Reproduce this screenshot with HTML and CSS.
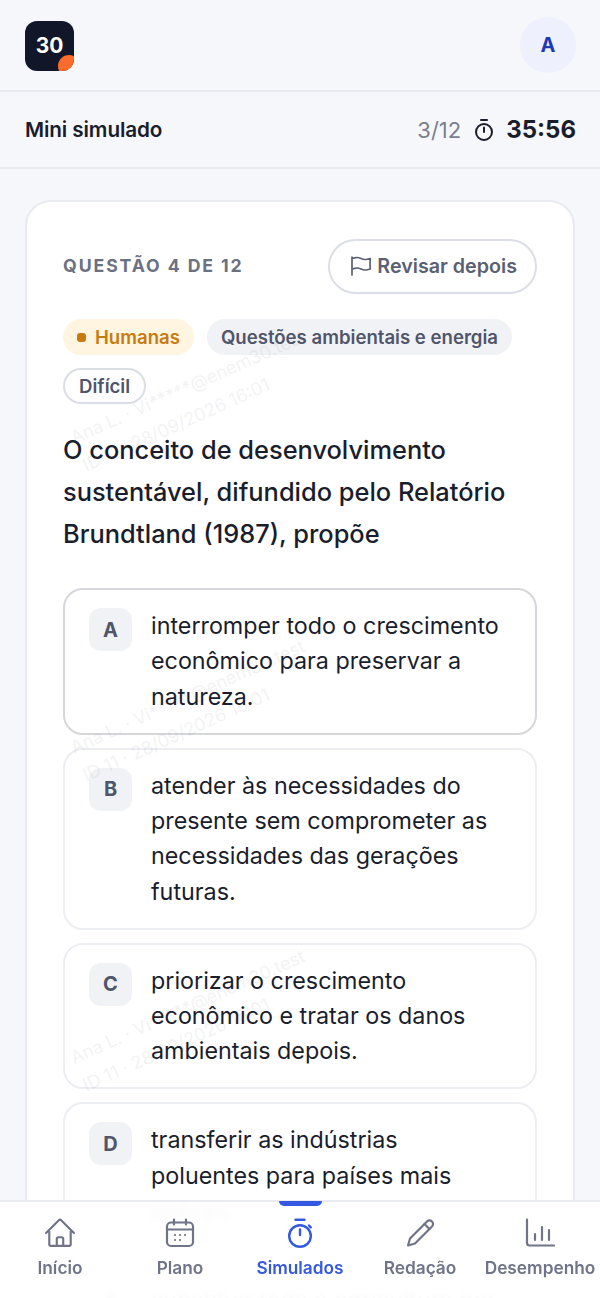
FILE: index.html
```html
<!DOCTYPE html>
<html lang="pt-BR">
<head>
<meta charset="utf-8">
<title>Mini simulado</title>
<link rel="stylesheet" href="styles.css">
</head>
<body>
<div class="page">
  <header class="topbar">
    <div class="logo"><span class="logo-num">30</span><span class="logo-dot"></span></div>
    <div class="avatar">A</div>
  </header>
  <section class="subbar">
    <div class="sub-title">Mini simulado</div>
    <div class="sub-right">
      <span class="progress">3/12</span>
      <svg class="timer-icon" viewBox="0 0 24 24" fill="none" stroke="#1a1d2b" stroke-width="2" stroke-linecap="round"><path d="M9 2h6"/><circle cx="12" cy="14" r="8"/><path d="M12 9.500V14"/></svg>
      <span class="time">35:56</span>
    </div>
  </section>
  <main class="main">
    <article class="card">
      <div class="mark mark-1"><div>Ana L. · Vi*****@enem30.test</div><div>ID 11 · 28/09/2026 16:01</div></div>
      <div class="mark mark-2"><div>Ana L. · Vi*****@enem30.test</div><div>ID 11 · 28/09/2026 16:01</div></div>
      <div class="mark mark-3"><div>Ana L. · Vi*****@enem30.test</div><div>ID 11 · 28/09/2026 16:01</div></div>
      <div class="card-head">
        <div class="q-label">QUESTÃO 4 DE 12</div>
        <button class="review">
          <svg class="flag" viewBox="0 0 24 24" fill="none" stroke="#5b6072" stroke-width="1.7" stroke-linecap="round" stroke-linejoin="round"><path d="M3 3v1.500M3 21v-6m0 0 2.770-.693a9 9 0 0 1 6.208.682l.108.054a9 9 0 0 0 6.086.710l3.114-.732a48.524 48.524 0 0 1-.005-10.499l-3.110.732a9 9 0 0 1-6.085-.711l-.108-.054a9 9 0 0 0-6.208-.682L3 4.500M3 15V4.500"/></svg>
          Revisar depois
        </button>
      </div>
      <div class="tags">
        <span class="tag tag-area"><i class="tag-dot"></i>Humanas</span>
        <span class="tag tag-topic">Questões ambientais e energia</span>
        <span class="tag tag-level">Difícil</span>
      </div>
      <h1 class="question">O conceito de desenvolvimento sustentável, difundido pelo Relatório Brundtland (1987), propõe</h1>
      <div class="options">
        <div class="option option-active"><span class="letter">A</span><span class="opt-text">interromper todo o crescimento econômico para preservar a natureza.</span></div>
        <div class="option"><span class="letter">B</span><span class="opt-text">atender às necessidades do presente sem comprometer as necessidades das gerações futuras.</span></div>
        <div class="option"><span class="letter">C</span><span class="opt-text">priorizar o crescimento econômico e tratar os danos ambientais depois.</span></div>
        <div class="option"><span class="letter">D</span><span class="opt-text">transferir as indústrias poluentes para países mais pobres.</span></div>
        <div class="option"><span class="letter">E</span><span class="opt-text">substituir toda a agricultura por reflorestamento.</span></div>
      </div>
    </article>
  </main>
  <nav class="nav">
    <a class="nav-item">
      <svg class="nav-icon" viewBox="1.5 1.5 21 21" fill="none" stroke="currentColor" stroke-width="1.500" stroke-linecap="round" stroke-linejoin="round"><path d="m2.250 12 8.954-8.955c.44-.439 1.152-.439 1.591 0L21.750 12M4.500 9.750v10.125c0 .621.504 1.125 1.125 1.125H9.750v-4.875c0-.621.504-1.125 1.125-1.125h2.250c.621 0 1.125.504 1.125 1.125V21h4.125c.621 0 1.125-.504 1.125-1.125V9.750M8.250 21h8.250"/></svg>
      <span>Início</span>
    </a>
    <a class="nav-item">
      <svg class="nav-icon" viewBox="0 0 30 30" fill="none" stroke="currentColor" stroke-width="2.200" stroke-linecap="round" stroke-linejoin="round"><rect x="2" y="4.500" width="26" height="23.500" rx="4"/><path d="M2 11.500h26M9 1.500v5M21 1.500v5"/><path d="M10 17h.01M15 17h.01M20 17h.01M10 22h.01M15 22h.01"/></svg>
      <span>Plano</span>
    </a>
    <a class="nav-item nav-active">
      <i class="nav-bar"></i>
      <svg class="nav-icon" viewBox="0 0 30 30" fill="none" stroke="currentColor" stroke-width="2.400" stroke-linecap="round" stroke-linejoin="round"><path d="M10.500 1.800h9"/><circle cx="15" cy="18" r="10.800"/><path d="M15 11.500V17M24 7.500l1.800 1.800"/></svg>
      <span>Simulados</span>
    </a>
    <a class="nav-item">
      <svg class="nav-icon" viewBox="0 0 30 30" fill="none" stroke="currentColor" stroke-width="2.200" stroke-linecap="round" stroke-linejoin="round"><path d="M5 20.500 22 3.500a3.500 3.500 0 0 1 5 5L10 25.500l-7 2z"/><path d="M19.500 6l5 5"/></svg>
      <span>Redação</span>
    </a>
    <a class="nav-item">
      <svg class="nav-icon" viewBox="0 0 30 30" fill="none" stroke="currentColor" stroke-width="2.200" stroke-linecap="round" stroke-linejoin="round"><path d="M2 1.500V25a2.500 2.500 0 0 0 2.500 2.500H29"/><path d="M10 22v-6M17 22V9M24 22V12"/></svg>
      <span>Desempenho</span>
    </a>
  </nav>
</div>
</body>
</html>
```
FILE: styles.css
```css
* { box-sizing: border-box; }
html, body { margin: 0; padding: 0; }
body { font-family: Inter, "Liberation Sans", sans-serif; background: #f6f7fb; color: #1a1d2b; }
.page { position: relative; width: 600px; height: 1298px; overflow: hidden; background: #f6f7fb; }

.topbar { height: 92px; display: flex; align-items: center; justify-content: space-between; padding: 0 25px; border-bottom: 2px solid #e9eaef; }
.logo { position: relative; width: 49px; height: 50px; margin-top: 1px; border-radius: 12px; background: #111729; overflow: hidden; display: flex; align-items: center; justify-content: center; }
.logo-num { color: #fff; font-size: 21px; font-weight: 700; }
.logo-dot { position: absolute; right: -6px; bottom: -6px; width: 22px; height: 22px; border-radius: 50%; background: #fb6b2c; }
.avatar { width: 56px; height: 56px; margin-right: -1px; border-radius: 50%; background: #eef1fd; color: #2138b5; display: flex; align-items: center; justify-content: center; font-size: 20px; font-weight: 700; }

.subbar { height: 77px; display: flex; align-items: center; justify-content: space-between; padding: 0 24px 0 25px; border-bottom: 2px solid #e9eaef; }
.sub-title { font-size: 20.700px; font-weight: 600; letter-spacing: -0.1px; }
.sub-right { display: flex; align-items: center; }
.progress { font-size: 22px; font-weight: 400; color: #7b7f8c; margin-right: 11px; }
.timer-icon { width: 24px; height: 24px; margin-right: 10px; }
.time { font-size: 24px; font-weight: 700; }

.main { padding: 31px 25px 0; }
.card { position: relative; background: #fff; border: 2px solid #e9eaef; border-radius: 26px; padding: 37px 36px 40px; }
.mark { position: absolute; left: 63px; color: #1a1d2b; opacity: 0.05; font-size: 18px; line-height: 30px; white-space: nowrap; transform: rotate(-24deg); transform-origin: left bottom; pointer-events: none; }
.mark-1 { top: 218px; }
.mark-2 { top: 528px; }
.mark-3 { top: 838px; }

.card-head { display: flex; align-items: center; justify-content: space-between; height: 54px; }
.q-label { font-size: 17.700px; font-weight: 700; letter-spacing: 1.9px; color: #6b7082; padding-bottom: 2px; }
.review { display: flex; align-items: center; gap: 4px; height: 55px; padding: 0 18px 0 19px; background: #fff; border: 2px solid #dcdee5; border-radius: 28px; font-family: inherit; font-size: 19.700px; font-weight: 600; color: #5b6072; }
.flag { width: 24px; height: 24px; }

.tags { display: flex; flex-wrap: wrap; gap: 13px; margin-top: 26px; }
.tag { height: 36px; display: inline-flex; align-items: center; border-radius: 18px; font-size: 18.600px; font-weight: 600; padding: 0 14px; }
.tag-area { background: #fff5e0; color: #c97a10; }
.tag-dot { width: 9px; height: 9px; border-radius: 3px; background: #c97a10; margin-right: 9px; }
.tag-topic { background: #f1f2f6; color: #50556a; }
.tag-level { background: #fff; border: 2px solid #dcdee5; color: #50556a; }

.question { margin: 25px 0 33px; font-size: 25.400px; line-height: 42px; font-weight: 500; color: #1a1d2b; }

.options { display: flex; flex-direction: column; gap: 13px; }
.option { display: flex; align-items: flex-start; gap: 19px; padding: 18px 30px 18.400px 24px; border: 2px solid #eceef2; border-radius: 20px; }
.option-active { border-color: #d6d7dc; }
.letter { flex: none; width: 43px; height: 43px; border-radius: 12px; background: #f1f2f6; color: #50556a; display: flex; align-items: center; justify-content: center; font-size: 20px; font-weight: 700; }
.opt-text { font-size: 23.300px; line-height: 35.400px; color: #1a1d2b; }

.nav { position: absolute; left: 0; right: 0; bottom: 0; height: 98px; display: flex; background: rgba(255,255,255,0.97); backdrop-filter: blur(3px); border-top: 2px solid #e9eaef; }
.nav-item { position: relative; flex: 1; display: flex; flex-direction: column; align-items: center; color: #6f7488; font-size: 17.300px; font-weight: 600; white-space: nowrap; }
.nav-icon { width: 30px; height: 30px; margin-top: 16px; margin-bottom: 9px; }
.nav-active { color: #3558e0; }
.nav-bar { position: absolute; top: -1px; left: 50%; width: 43px; height: 5px; margin-left: -21px; background: #3558e0; border-radius: 0 0 6px 6px; }
```
